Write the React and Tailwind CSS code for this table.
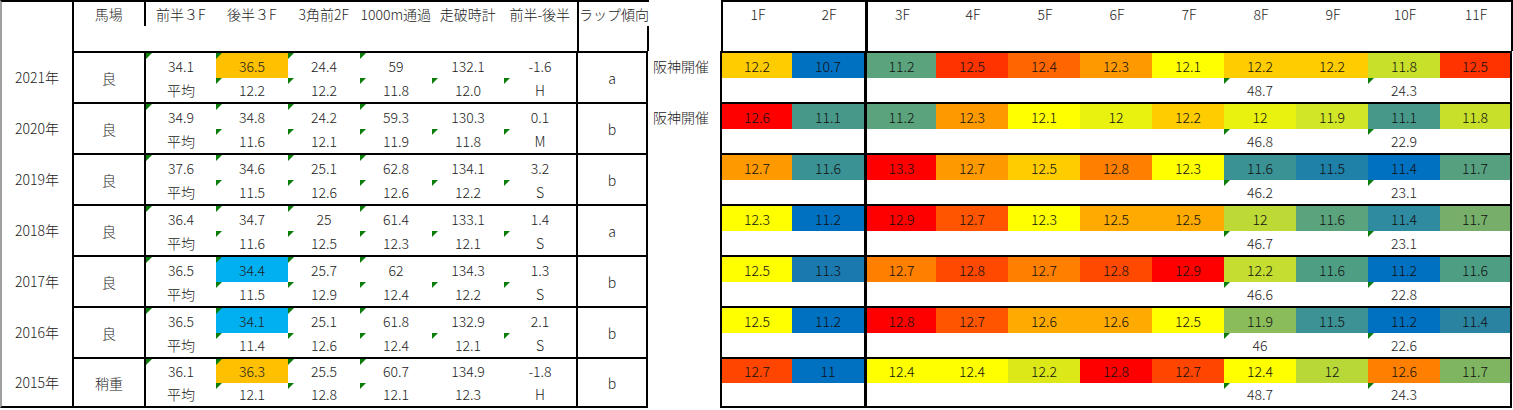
import React from 'react';

const FONT = "font-['Noto_Sans_CJK_JP','Noto_Sans',sans-serif]";

const heads = ['前半３F', '後半３F', '3角前2F', '1000m通過', '走破時計', '前半-後半'];
const lapHeads = ['1F', '2F', '3F', '4F', '5F', '6F', '7F', '8F', '9F', '10F', '11F'];

// 6 data columns of the left table: the first one sits after a border, so it is 2px narrower
const leftW = ['w-[70px]', 'w-[72px]', 'w-[72px]', 'w-[72px]', 'w-[72px]', 'w-[72px]'];
// 11 lap columns: 1F / 11F lose 2px to the outer border, 3F carries the thick divider
const lapW = [
    'w-[70px]', 'w-[72px]', 'w-[72px] border-l-[3px] border-black', 'w-[72px]', 'w-[72px]', 'w-[72px]',
    'w-[72px]', 'w-[72px]', 'w-[72px]', 'w-[72px]', 'w-[70px]',
];

const rows = [
    {
        year: '2021年', baba: '良', lap: 'a', note: '阪神開催', hl: 'bg-[#ffc000]', tail: true,
        top: ['34.1', '36.5', '24.4', '59', '132.1', '-1.6'],
        bot: ['平均', '12.2', '12.2', '11.8', '12.0', 'H'],
        laps: [
            ['12.2', 'bg-[#ffcc00]'], ['10.7', 'bg-[#0070c0]'], ['11.2', 'bg-[#5aa37c]'], ['12.5', 'bg-[#ff3300]'],
            ['12.4', 'bg-[#ff6600]'], ['12.3', 'bg-[#ff9900]'], ['12.1', 'bg-[#ffff00]'], ['12.2', 'bg-[#ffcc00]'],
            ['12.2', 'bg-[#ffcc00]'], ['11.8', 'bg-[#c8e02a]'], ['12.5', 'bg-[#ff3300]'],
        ],
        sub: ['48.7', '24.3'],
    },
    {
        year: '2020年', baba: '良', lap: 'b', note: '阪神開催', hl: '', tail: true,
        top: ['34.9', '34.8', '24.2', '59.3', '130.3', '0.1'],
        bot: ['平均', '11.6', '12.1', '11.9', '11.8', 'M'],
        laps: [
            ['12.6', 'bg-[#ff0000]'], ['11.1', 'bg-[#48988a]'], ['11.2', 'bg-[#5aa37c]'], ['12.3', 'bg-[#ff9900]'],
            ['12.1', 'bg-[#ffff00]'], ['12', 'bg-[#e9f10e]'], ['12.2', 'bg-[#ffcc00]'], ['12', 'bg-[#e9f10e]'],
            ['11.9', 'bg-[#d2e628]'], ['11.1', 'bg-[#48988a]'], ['11.8', 'bg-[#c8e02a]'],
        ],
        sub: ['46.8', '22.9'],
    },
    {
        year: '2019年', baba: '良', lap: 'b', note: '', hl: '', tail: true,
        top: ['37.6', '34.6', '25.1', '62.8', '134.1', '3.2'],
        bot: ['平均', '11.5', '12.6', '12.6', '12.2', 'S'],
        laps: [
            ['12.7', 'bg-[#ff9900]'], ['11.6', 'bg-[#3a9294]'], ['13.3', 'bg-[#ff0000]'], ['12.7', 'bg-[#ff9900]'],
            ['12.5', 'bg-[#ffcc00]'], ['12.8', 'bg-[#ff8000]'], ['12.3', 'bg-[#ffff00]'], ['11.6', 'bg-[#3a9294]'],
            ['11.5', 'bg-[#1f80a8]'], ['11.4', 'bg-[#0070c0]'], ['11.7', 'bg-[#56a080]'],
        ],
        sub: ['46.2', '23.1'],
    },
    {
        year: '2018年', baba: '良', lap: 'a', note: '', hl: '', tail: true,
        top: ['36.4', '34.7', '25', '61.4', '133.1', '1.4'],
        bot: ['平均', '11.6', '12.5', '12.3', '12.1', 'S'],
        laps: [
            ['12.3', 'bg-[#ffff00]'], ['11.2', 'bg-[#0070c0]'], ['12.9', 'bg-[#ff0000]'], ['12.7', 'bg-[#ff5500]'],
            ['12.3', 'bg-[#ffff00]'], ['12.5', 'bg-[#ffaa00]'], ['12.5', 'bg-[#ffaa00]'], ['12', 'bg-[#bcd936]'],
            ['11.6', 'bg-[#5ba37d]'], ['11.4', 'bg-[#2f8ba0]'], ['11.7', 'bg-[#76ae6a]'],
        ],
        sub: ['46.7', '23.1'],
    },
    {
        year: '2017年', baba: '良', lap: 'b', note: '', hl: 'bg-[#00b0f0]', tail: true,
        top: ['36.5', '34.4', '25.7', '62', '134.3', '1.3'],
        bot: ['平均', '11.5', '12.9', '12.4', '12.2', 'S'],
        laps: [
            ['12.5', 'bg-[#ffff00]'], ['11.3', 'bg-[#1a7ab0]'], ['12.7', 'bg-[#ff7f00]'], ['12.8', 'bg-[#ff4800]'],
            ['12.7', 'bg-[#ff7f00]'], ['12.8', 'bg-[#ff4800]'], ['12.9', 'bg-[#ff0000]'], ['12.2', 'bg-[#c4dd30]'],
            ['11.6', 'bg-[#4e9e83]'], ['11.2', 'bg-[#0070c0]'], ['11.6', 'bg-[#4e9e83]'],
        ],
        sub: ['46.6', '22.8'],
    },
    {
        year: '2016年', baba: '良', lap: 'b', note: '', hl: 'bg-[#00b0f0]', tail: true,
        top: ['36.5', '34.1', '25.1', '61.8', '132.9', '2.1'],
        bot: ['平均', '11.4', '12.6', '12.4', '12.1', 'S'],
        laps: [
            ['12.5', 'bg-[#ffff00]'], ['11.2', 'bg-[#0070c0]'], ['12.8', 'bg-[#ff0000]'], ['12.7', 'bg-[#ff5500]'],
            ['12.6', 'bg-[#ffaa00]'], ['12.6', 'bg-[#ffaa00]'], ['12.5', 'bg-[#ffff00]'], ['11.9', 'bg-[#8bbc5a]'],
            ['11.5', 'bg-[#3c9294]'], ['11.2', 'bg-[#0070c0]'], ['11.4', 'bg-[#2a83a0]'],
        ],
        sub: ['46', '22.6'],
    },
    {
        year: '2015年', baba: '稍重', lap: 'b', note: '', hl: 'bg-[#ffc000]', tail: false,
        top: ['36.1', '36.3', '25.5', '60.7', '134.9', '-1.8'],
        bot: ['平均', '12.1', '12.8', '12.1', '12.3', 'H'],
        laps: [
            ['12.7', 'bg-[#ff4500]'], ['11', 'bg-[#0070c0]'], ['12.4', 'bg-[#ffff00]'], ['12.4', 'bg-[#ffff00]'],
            ['12.2', 'bg-[#dce818]'], ['12.8', 'bg-[#ff0000]'], ['12.7', 'bg-[#ff4500]'], ['12.4', 'bg-[#ffff00]'],
            ['12', 'bg-[#b8d838]'], ['12.6', 'bg-[#ff8000]'], ['11.7', 'bg-[#7fb560]'],
        ],
        sub: ['48.7', '24.3'],
    },
];

// small green marker in the top-left corner of a cell (Excel's "number stored as text")
const Tri = () => (
    <svg className="absolute left-0 top-0" width="6" height="6" viewBox="0 0 6 6">
        <polygon points="0,0 6,0 0,6" fill="#0a7d0a" />
    </svg>
);

const Cell = ({ w, tri, className = '', children }) => (
    <div className={`relative flex items-center justify-center shrink-0 ${w} ${className}`}>
        {tri && <Tri />}
        {children}
    </div>
);

const App = () => {
    return (
        <div className={`bg-white w-[1513px] h-[410px] overflow-hidden text-[14px] font-light leading-none text-[#222] ${FONT}`}>

            {/* HEADER */}
            <div className="flex h-[51px]">
                <div className="w-[72px] border-t-2 border-l-2 border-t-black border-l-[#a0a0a0]" />
                <div className="w-[72px] border-t-2 border-l-2 border-black">
                    <div className="h-[24px] flex items-center justify-center">馬場</div>
                </div>
                <div className="w-[432px] border-t-2 border-l-2 border-black flex h-[24px] box-content">
                    {heads.map((h, i) => (
                        <Cell key={h} w={leftW[i]} className="whitespace-nowrap">{h}</Cell>
                    ))}
                </div>
                <div className="w-[72px] border-t-2 border-l-2 border-black flex flex-col">
                    <div className="h-[24px] flex items-center justify-center whitespace-nowrap">ラップ傾向</div>
                    <div className="flex-1 border-r-2 border-black" />
                </div>
                <div className="w-[72px]" />
                <div className="w-[792px] border-t-2 border-x-2 border-black flex items-start">
                    {lapHeads.map((h, i) => (
                        <Cell key={h} w={lapW[i]} className="h-[49px] items-start pt-[5px]">
                            {h}
                        </Cell>
                    ))}
                </div>
            </div>

            {/* DONNÉES */}
            {rows.map((r, ri) => {
                const last = ri === rows.length - 1;
                const b = last ? 'border-b-2' : '';
                return (
                    <div key={r.year} className="flex h-[51px]">
                        <div className={`w-[72px] flex items-center justify-center border-l-2 border-l-[#a0a0a0] border-b-black ${b}`}>
                            {r.year}
                        </div>
                        <div className={`w-[72px] flex items-center justify-center border-t-2 border-l-2 border-black ${b}`}>
                            {r.baba}
                        </div>
                        <div className={`w-[432px] flex flex-col border-t-2 border-l-2 border-black ${b}`}>
                            <div className="flex h-[25px]">
                                {r.top.map((v, i) => (
                                    <Cell key={i} w={leftW[i]} tri={i < 4} className={i === 1 ? r.hl : ''}>{v}</Cell>
                                ))}
                            </div>
                            <div className="flex h-[24px]">
                                {r.bot.map((v, i) => (
                                    <Cell key={i} w={leftW[i]} tri={i > 0 && (i < 4 || r.tail)}>{v}</Cell>
                                ))}
                            </div>
                        </div>
                        <div className={`w-[72px] flex items-center justify-center border-t-2 border-x-2 border-black ${b}`}>
                            {r.lap}
                        </div>
                        <div className="w-[72px] flex flex-col">
                            <div className="h-[27px] pt-[2px] pl-[5px] flex items-center whitespace-nowrap">{r.note}</div>
                        </div>
                        <div className={`w-[792px] flex flex-col border-t-2 border-x-2 border-black ${b}`}>
                            <div className="flex h-[25px]">
                                {r.laps.map(([v, c], i) => (
                                    <Cell key={i} w={lapW[i]} className={`text-[#111] ${c}`}>{v}</Cell>
                                ))}
                            </div>
                            <div className="flex h-[24px]">
                                {lapW.map((w, i) => (
                                    <Cell key={i} w={w} tri={i === 7 || i === 9}>
                                        {i === 7 ? r.sub[0] : i === 9 ? r.sub[1] : ''}
                                    </Cell>
                                ))}
                            </div>
                        </div>
                    </div>
                );
            })}
        </div>
    );
};

export default App;
